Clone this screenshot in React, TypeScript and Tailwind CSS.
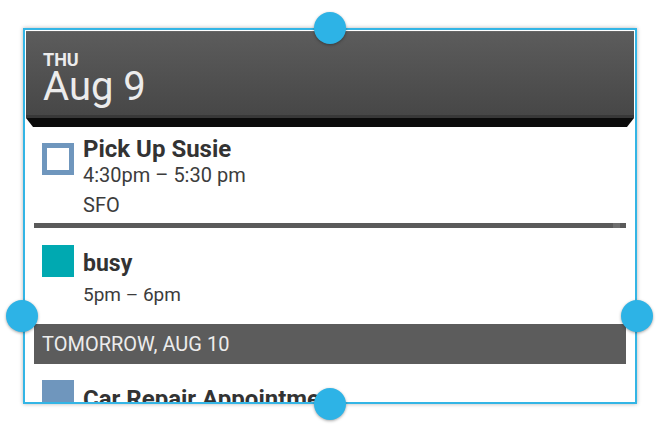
import React from "react";

const font = { fontFamily: "Roboto, 'Noto Sans', sans-serif" };

function Handle({ className }: { className: string }) {
   return (
      <div
         className={`absolute w-[32px] h-[32px] rounded-full bg-[#2db3e6] shadow-[0_1px_3px_rgba(0,0,0,0.35)] ${className}`}
      />
   );
}

function Swatch({ kind }: { kind: "outline" | "teal" | "blue" }) {
   if (kind === "outline")
      return <div className="w-[32px] h-[32px] shrink-0 border-[5px] border-[#6f96bd] bg-white" />;
   if (kind === "teal") return <div className="w-[32px] h-[32px] shrink-0 bg-[#00a9b1]" />;
   return <div className="w-[32px] h-[32px] shrink-0 bg-[#6f96bd]" />;
}

export default function App() {
   return (
      <div className="relative w-[669px] h-[437px] bg-white overflow-hidden" style={font}>
         <div className="ml-[23px] mt-[28px] w-[614px] h-[376px] border-2 border-[#33b5e5] bg-white shadow-[0_0_4px_rgba(0,0,0,0.3)] overflow-hidden">
            {/* header */}
            <div className="mx-[1px] mt-[1px]">
               <div className="h-[84px] bg-gradient-to-b from-[#5c5c5c] to-[#474747] border-t border-[#666] pl-[17px] pt-[19px] text-[#ececec]">
                  <div className="text-[18px] font-bold leading-[18px]">THU</div>
                  <div className="text-[40px] leading-[36px]">Aug 9</div>
               </div>
               <div className="h-[3px] bg-[#383838]" />
               <div className="h-[9px] bg-[#0b0b0b] [clip-path:polygon(0_0,100%_0,calc(100%-7px)_100%,7px_100%)]" />
            </div>

            {/* list */}
            <div className="px-[9px]">
               <div className="flex items-start pt-[8px]">
                  <div className="ml-[8px] mt-[8px]">
                     <Swatch kind="outline" />
                  </div>
                  <div className="ml-[9px] text-[#333]">
                     <div className="text-[24px] font-bold leading-[28px]">Pick Up Susie</div>
                     <div className="text-[20px] leading-[24px] text-[#3c3c3c]">4:30pm – 5:30 pm</div>
                     <div className="text-[20px] leading-[24px] mt-[6px] text-[#3c3c3c]">SFO</div>
                  </div>
               </div>
               <div className="mt-[6px] h-[5px] bg-[#5a5a5a] flex justify-end">
                  <div className="w-[7px] h-full bg-[#6e6e6e] mr-[6px]" />
               </div>

               <div className="flex items-start">
                  <div className="ml-[8px] mt-[17px]">
                     <Swatch kind="teal" />
                  </div>
                  <div className="ml-[9px] text-[#333] pt-[22px]">
                     <div className="text-[23px] font-bold leading-[28px]">busy</div>
                     <div className="text-[19px] leading-[24px] mt-[5px] text-[#3c3c3c]">5pm – 6pm</div>
                  </div>
               </div>

               <div className="mt-[17px] h-[40px] bg-[#5c5c5c] pl-[8px] flex items-center text-[20px] text-[#ececec]">
                  TOMORROW, AUG 10
               </div>

               <div className="flex items-start">
                  <div className="ml-[8px] mt-[16px]">
                     <Swatch kind="blue" />
                  </div>
                  <div className="ml-[9px] text-[#333] pt-[21px]">
                     <div className="text-[24px] font-bold leading-[28px] whitespace-nowrap">Car Repair Appointment</div>
                  </div>
               </div>
            </div>
         </div>

         <Handle className="left-[314px] top-[12px]" />
         <Handle className="left-[6px] top-[300px]" />
         <Handle className="left-[621px] top-[300px]" />
         <Handle className="left-[314px] top-[388px]" />
      </div>
   );
}
